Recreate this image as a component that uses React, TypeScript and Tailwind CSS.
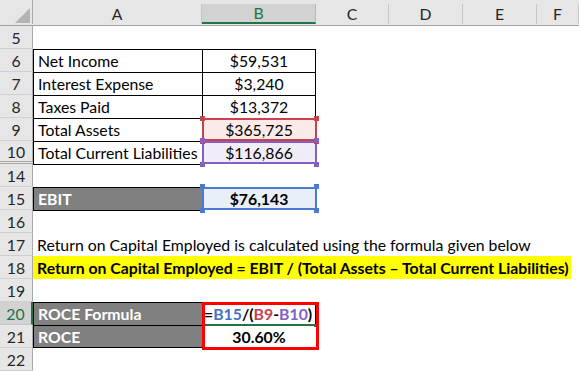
import React from "react";

const GRID = "grid grid-cols-[33px_169px_114px_73px_74px_74px_42px]";

function RowHead({ n, selected = false }: { n: number; selected?: boolean }) {
  if (selected) {
    return (
      <div className="h-full bg-[#d2d2d2] border-r-2 border-r-[#217346] border-b border-b-[#c8c8c8] flex items-center justify-center text-[#217346] pt-[1px]">
        {n}
      </div>
    );
  }
  return (
    <div className="h-full bg-[#e6e6e6] border-r border-r-[#ababab] border-b border-b-[#d0d0d0] flex items-center justify-center text-[#262626] pt-[1px]">
      {n}
    </div>
  );
}

function Handles({ color }: { color: string }) {
  const c = "absolute w-[5px] h-[5px] z-30 " + color;
  return (
    <>
      <div className={c + " -left-[2px] -top-[3px]"} />
      <div className={c + " -right-[3px] -top-[3px]"} />
      <div className={c + " -left-[2px] -bottom-[3px]"} />
      <div className={c + " -right-[3px] -bottom-[3px]"} />
    </>
  );
}

function Empty() {
  return <div className="h-full" />;
}

export default function App() {
  return (
    <div className="w-[579px] h-[372px] bg-white overflow-hidden font-['Lato',sans-serif] text-[15.8px] text-black leading-[18px]">
      {/* column headers */}
      <div className={GRID + " h-[26px] bg-[#e6e6e6] border-b border-b-[#a0a0a0]"}>
        <div className="relative h-full border-r border-r-[#ababab]">
          <svg className="absolute left-0 top-0" width="33" height="26" viewBox="0 0 33 26">
            <polygon points="15,23 30,8 30,23" fill="#b4b4b4" />
          </svg>
        </div>
        <div className="pt-1 h-full">
          <div className="h-full border-r border-r-[#c6c6c6] flex items-center justify-center text-[#262626]">A</div>
        </div>
        <div className="pt-1 h-full">
          <div className="h-full bg-[#d2d2d2] border-r border-r-[#b8b8b8] border-b-2 border-b-[#217346] flex items-center justify-center text-[#217346]">B</div>
        </div>
        <div className="pt-1 h-full">
          <div className="h-full border-r border-r-[#c6c6c6] flex items-center justify-center text-[#262626]">C</div>
        </div>
        <div className="pt-1 h-full">
          <div className="h-full border-r border-r-[#c6c6c6] flex items-center justify-center text-[#262626]">D</div>
        </div>
        <div className="pt-1 h-full">
          <div className="h-full border-r border-r-[#c6c6c6] flex items-center justify-center text-[#262626]">E</div>
        </div>
        <div className="pt-1 h-full">
          <div className="h-full border-r border-r-[#c6c6c6] flex items-center justify-center text-[#262626]">F</div>
        </div>
        <div className="pt-1 h-full" />
      </div>

      {/* row 5 */}
      <div className={GRID + " h-[23px]"}>
        <RowHead n={5} />
        <Empty /><Empty /><Empty /><Empty /><Empty /><Empty />
      </div>

      {[
        ["6", "Net Income", "$59,531"],
        ["7", "Interest Expense", "$3,240"],
        ["8", "Taxes Paid", "$13,372"],
      ].map(([n, a, b]) => (
        <div key={n} className={GRID + " h-[23px]"}>
          <RowHead n={Number(n)} />
          <div className="h-full border-t border-l border-black flex items-end pb-[2px] pl-[4px] whitespace-nowrap">{a}</div>
          <div className="h-full border-t border-l border-r border-black flex items-end justify-center pb-[2px]">{b}</div>
          <Empty /><Empty /><Empty /><Empty />
        </div>
      ))}

      {/* row 9 */}
      <div className={GRID + " h-[23px]"}>
        <RowHead n={9} />
        <div className="h-full border-t border-l border-black flex items-end pb-[2px] pl-[4px] whitespace-nowrap">Total Assets</div>
        <div className="relative h-full bg-[#fbeaea] border-t border-black flex items-end justify-center pb-[2px]">
          $365,725
          <div className="absolute -top-px left-0 -right-px bottom-0 border-2 border-[#c8414b] z-20" />
          <Handles color="bg-[#c8414b]" />
        </div>
        <Empty /><Empty /><Empty /><Empty />
      </div>

      {/* row 10 */}
      <div className={GRID + " h-[23px]"}>
        <div className="h-full bg-[#e6e6e6] border-r border-r-[#ababab] border-b-[3px] border-double border-b-[#a8a8a8] flex items-center justify-center text-[#262626] pt-[1px]">10</div>
        <div className="h-full border-t border-l border-black flex items-end pb-[2px] pl-[4px] whitespace-nowrap">Total Current Liabilities</div>
        <div className="relative h-full bg-[#f1edf8] flex items-end justify-center pb-[2px]">
          $116,866
          <div className="absolute top-0 left-0 -right-px bottom-0 border-2 border-[#8460c4] z-20" />
          <Handles color="bg-[#8460c4]" />
        </div>
        <Empty /><Empty /><Empty /><Empty />
      </div>

      {/* row 14 */}
      <div className={GRID + " h-[23px]"}>
        <RowHead n={14} />
        <div className="h-full border-t border-black" />
        <Empty /><Empty /><Empty /><Empty /><Empty />
      </div>

      {/* row 15 */}
      <div className={GRID + " h-[23px]"}>
        <RowHead n={15} />
        <div className="h-full border-t border-l border-black bg-[#808080] text-white font-bold flex items-end pb-[2px] pl-[4px]">EBIT</div>
        <div className="relative h-full bg-[#e8eff9] flex items-end justify-center pb-[2px] font-bold">
          $76,143
          <div className="absolute top-0 left-0 -right-px bottom-0 border-2 border-[#4a7bd0] z-20" />
          <Handles color="bg-[#4a7bd0]" />
        </div>
        <Empty /><Empty /><Empty /><Empty />
      </div>

      {/* row 16 */}
      <div className={GRID + " h-[23px]"}>
        <RowHead n={16} />
        <div className="h-full border-t border-black" />
        <Empty /><Empty /><Empty /><Empty /><Empty />
      </div>

      {/* row 17 */}
      <div className={GRID + " h-[23px]"}>
        <RowHead n={17} />
        <div className="col-span-6 h-full flex items-end pb-[2px] pl-[4px] whitespace-nowrap">
          Return on Capital Employed is calculated using the formula given below
        </div>
      </div>

      {/* row 18 */}
      <div className={GRID + " h-[23px]"}>
        <RowHead n={18} />
        <div className="col-span-6 h-full">
          <div className="h-full w-[538px] bg-[#ffff00] font-bold flex items-end pb-[2px] pl-[4px] whitespace-nowrap">
            Return on Capital Employed = EBIT / (Total Assets – Total Current Liabilities)
          </div>
        </div>
      </div>

      {/* row 19 */}
      <div className={GRID + " h-[23px]"}>
        <RowHead n={19} />
        <Empty /><Empty /><Empty /><Empty /><Empty /><Empty />
      </div>

      {/* row 20 */}
      <div className={GRID + " h-[23px]"}>
        <RowHead n={20} selected />
        <div className="h-full border-t border-l border-black bg-[#808080] text-white font-bold flex items-end pb-[2px] pl-[4px]">ROCE Formula</div>
        <div className="relative h-full border-t border-l border-r border-black flex items-end pb-[2px] pl-[1px] font-bold whitespace-nowrap">
          <span>=</span>
          <span className="text-[#4472c4]">B15</span>
          <span>/(</span>
          <span className="text-[#c8414b]">B9</span>
          <span>-</span>
          <span className="text-[#8460c4]">B10</span>
          <span>)</span>
          <div className="absolute left-[1px] -bottom-px w-[110px] h-[2px] bg-[#217346] z-20" />
          <div className="absolute left-[111px] -bottom-[2px] w-[3px] h-[3px] bg-[#217346] z-20" />
          <div className="absolute -left-px -top-px w-[117px] h-[48px] border-[3px] border-[#ff0000] z-30" />
        </div>
        <Empty /><Empty /><Empty /><Empty />
      </div>

      {/* row 21 */}
      <div className={GRID + " h-[23px]"}>
        <RowHead n={21} />
        <div className="h-full border-t border-l border-b border-black bg-[#808080] text-white font-bold flex items-end pb-[1px] pl-[4px]">ROCE</div>
        <div className="h-full flex items-end justify-center pb-[2px] font-bold">30.60%</div>
        <Empty /><Empty /><Empty /><Empty />
      </div>

      {/* row 22 */}
      <div className={GRID + " h-[23px]"}>
        <RowHead n={22} />
        <Empty /><Empty /><Empty /><Empty /><Empty /><Empty />
      </div>
    </div>
  );
}
